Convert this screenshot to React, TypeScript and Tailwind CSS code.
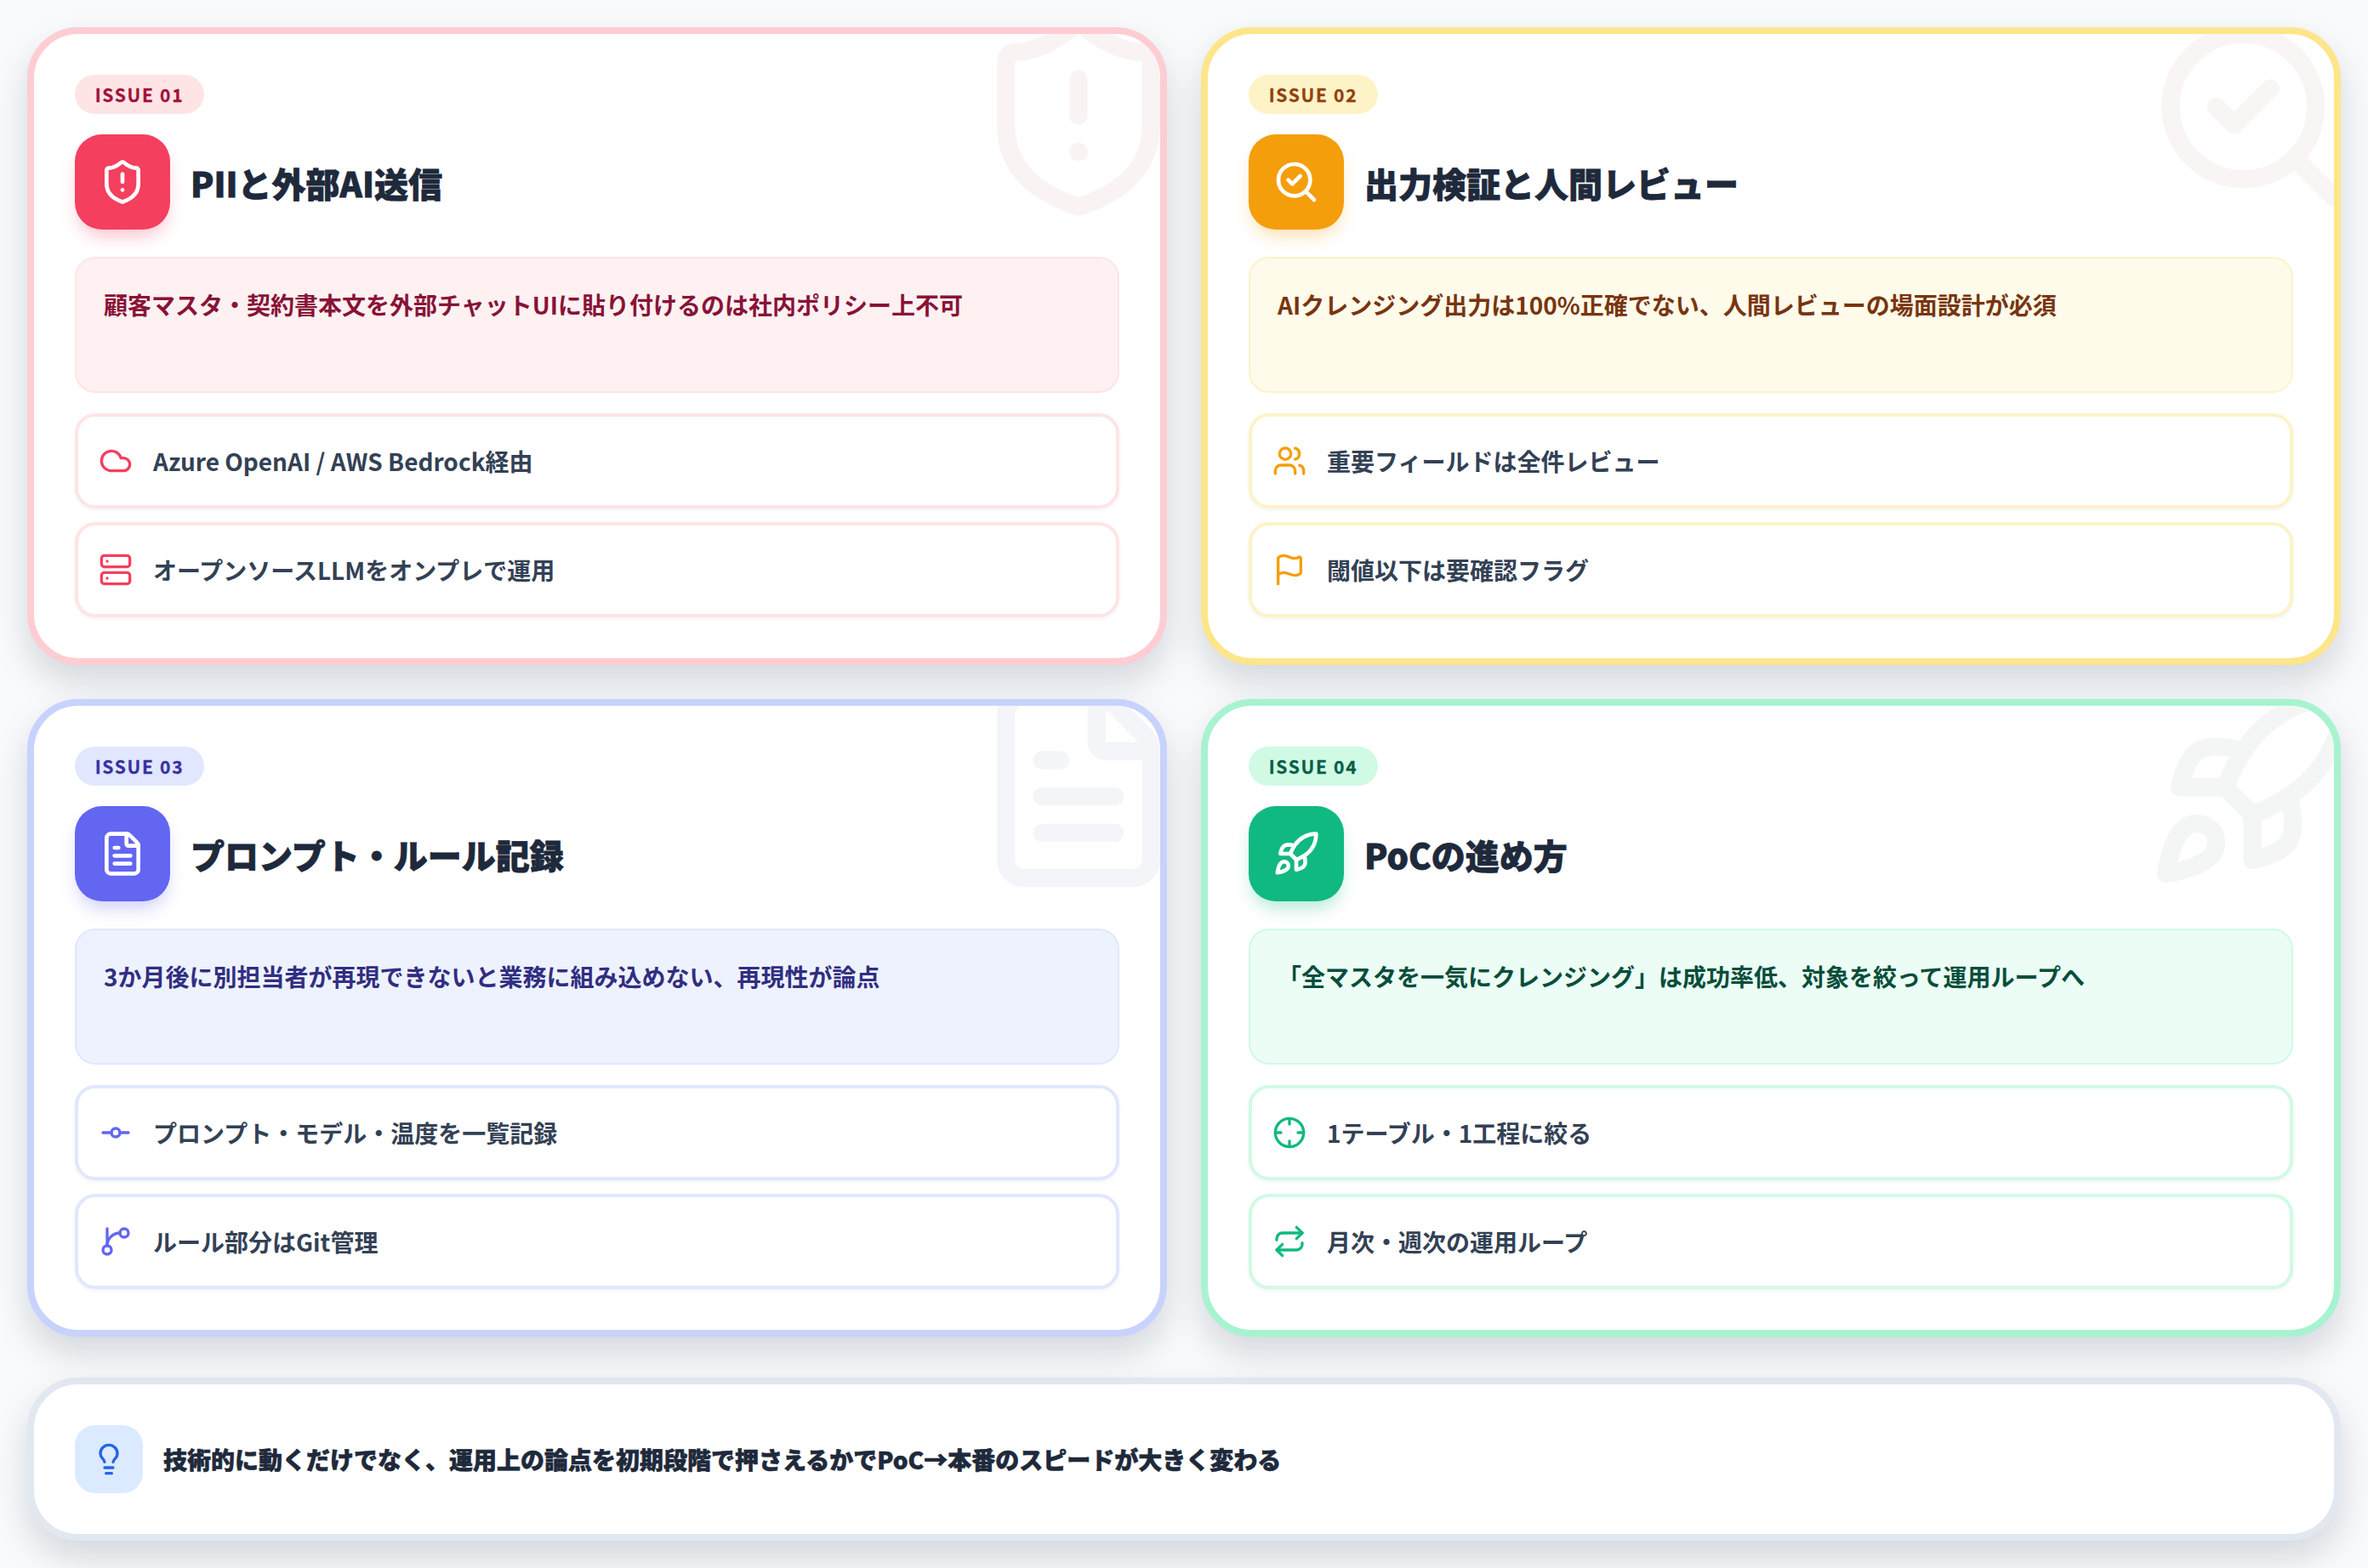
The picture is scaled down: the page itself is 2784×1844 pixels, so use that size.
import React from "react";
import {
  ShieldAlert, SearchCheck, FileText, Rocket, Cloud, Server, Users, Flag,
  GitCommitHorizontal, Crosshair, Repeat, Lightbulb, LucideProps,
} from "lucide-react";

type IconType = React.ComponentType<LucideProps>;

function BranchIcon({ size = 24, strokeWidth = 2, className }: LucideProps) {
  return (
    <svg
      width={size}
      height={size}
      viewBox="0 0 24 24"
      fill="none"
      stroke="currentColor"
      strokeWidth={strokeWidth}
      strokeLinecap="round"
      strokeLinejoin="round"
      className={className}
    >
      <path d="M6 3v12" />
      <circle cx="18" cy="6" r="3" />
      <circle cx="6" cy="18" r="3" />
      <path d="M15 6a9 9 0 0 0-9 9" />
    </svg>
  );
}

type Issue = {
  no: string; title: string; note: string;
  icon: IconType; mark: string;
  border: string; pill: string; box: string; info: string; row: string; rowIcon: string;
  items: { icon: IconType; text: string }[];
};

const issues: Issue[] = [
  {
    no: "ISSUE 01", title: "PIIと外部AI送信",
    note: "顧客マスタ・契約書本文を外部チャットUIに貼り付けるのは社内ポリシー上不可",
    icon: ShieldAlert, mark: "text-[#faf3f4]",
    border: "border-[#fecdd3]",
    pill: "bg-[#ffe4e6] text-[#9f1239]",
    box: "bg-[#f43f5e] shadow-[0_12px_20px_-4px_rgba(244,63,94,0.3)]",
    info: "bg-[#fff1f2] border-[#ffe4e6] text-[#881337]",
    row: "border-[#ffe4e6]", rowIcon: "text-[#f43f5e]",
    items: [
      { icon: Cloud, text: "Azure OpenAI / AWS Bedrock経由" },
      { icon: Server, text: "オープンソースLLMをオンプレで運用" },
    ],
  },
  {
    no: "ISSUE 02", title: "出力検証と人間レビュー",
    note: "AIクレンジング出力は100%正確でない、人間レビューの場面設計が必須",
    icon: SearchCheck, mark: "text-[#f8f5f4]",
    border: "border-[#fde68a]",
    pill: "bg-[#fef3c7] text-[#92400e]",
    box: "bg-[#f59e0b] shadow-[0_12px_20px_-4px_rgba(245,158,11,0.3)]",
    info: "bg-[#fffbeb] border-[#fef3c7] text-[#78350f]",
    row: "border-[#fef3c7]", rowIcon: "text-[#f59e0b]",
    items: [
      { icon: Users, text: "重要フィールドは全件レビュー" },
      { icon: Flag, text: "閾値以下は要確認フラグ" },
    ],
  },
  {
    no: "ISSUE 03", title: "プロンプト・ルール記録",
    note: "3か月後に別担当者が再現できないと業務に組み込めない、再現性が論点",
    icon: FileText, mark: "text-[#f4f5f8]",
    border: "border-[#c7d2fe]",
    pill: "bg-[#e0e7ff] text-[#3730a3]",
    box: "bg-[#6366f1] shadow-[0_12px_20px_-4px_rgba(99,102,241,0.3)]",
    info: "bg-[#eef2ff] border-[#e0e7ff] text-[#312e81]",
    row: "border-[#e0e7ff]", rowIcon: "text-[#6366f1]",
    items: [
      { icon: GitCommitHorizontal, text: "プロンプト・モデル・温度を一覧記録" },
      { icon: BranchIcon, text: "ルール部分はGit管理" },
    ],
  },
  {
    no: "ISSUE 04", title: "PoCの進め方",
    note: "「全マスタを一気にクレンジング」は成功率低、対象を絞って運用ループへ",
    icon: Rocket, mark: "text-[#f4f6f5]",
    border: "border-[#a7f3d0]",
    pill: "bg-[#d1fae5] text-[#065f46]",
    box: "bg-[#10b981] shadow-[0_12px_20px_-4px_rgba(16,185,129,0.3)]",
    info: "bg-[#ecfdf5] border-[#d1fae5] text-[#064e3b]",
    row: "border-[#d1fae5]", rowIcon: "text-[#10b981]",
    items: [
      { icon: Crosshair, text: "1テーブル・1工程に絞る" },
      { icon: Repeat, text: "月次・週次の運用ループ" },
    ],
  },
];

function Card({ issue }: { issue: Issue }) {
  const Icon = issue.icon;
  return (
    <div className={`relative h-[750px] overflow-hidden rounded-[60px] border-[8px] bg-white p-[48px] shadow-[0_20px_40px_rgba(15,23,42,0.15)] ${issue.border}`}>
      <Icon size={256} strokeWidth={2} className={`absolute right-[-32px] top-[-32px] ${issue.mark}`} />
      <div className="relative flex flex-col">
        <span className={`flex h-[46px] w-[152px] items-center justify-center rounded-full pt-[2px] text-[21px] font-bold tracking-[1.7px] [-webkit-text-stroke:0.3px_currentColor] ${issue.pill}`}>
          {issue.no}
        </span>
        <div className="mt-[24px] flex items-center gap-[24px]">
          <div className={`flex h-[112px] w-[112px] items-center justify-center rounded-[32px] text-white ${issue.box}`}>
            <Icon size={56} strokeWidth={2} />
          </div>
          <h2 className="pt-[2px] text-[40px] font-black leading-none text-[#1e293b] [-webkit-text-stroke:0.8px_#1e293b]">{issue.title}</h2>
        </div>
        <div className={`mt-[32px] h-[160px] rounded-[24px] border-2 px-[32px] py-[32px] text-[28px] font-bold leading-[1.6] ${issue.info}`}>
          {issue.note}
        </div>
        <div className="mt-[24px] flex flex-col gap-[16px]">
          {issue.items.map((it) => {
            const ItemIcon = it.icon;
            return (
              <div key={it.text} className={`flex h-[112px] items-center gap-[24px] rounded-[24px] border-[4px] bg-white px-[24px] shadow-[0_2px_4px_rgba(15,23,42,0.05)] ${issue.row}`}>
                <ItemIcon size={40} strokeWidth={2} className={`shrink-0 ${issue.rowIcon}`} />
                <span className="text-[28px] font-bold text-[#334155]">{it.text}</span>
              </div>
            );
          })}
        </div>
      </div>
    </div>
  );
}

export default function App() {
  return (
    <div className="h-[1844px] w-[2784px] overflow-hidden bg-[#f8fafc] p-[32px] font-['Noto_Sans_CJK_JP','Noto_Sans',sans-serif]">
      <div className="grid grid-cols-2 gap-[40px]">
        {issues.map((i) => (
          <Card key={i.no} issue={i} />
        ))}
      </div>
      <div className="mt-[48px] flex h-[192px] items-center gap-[24px] rounded-[60px] border-[8px] border-[#e2e8f0] bg-white px-[48px] shadow-[0_20px_40px_rgba(15,23,42,0.15)]">
        <div className="flex h-[80px] w-[80px] items-center justify-center rounded-[24px] bg-[#dbeafe] text-[#2563eb]">
          <Lightbulb size={40} strokeWidth={2} />
        </div>
        <p className="text-[28px] font-black text-[#1e293b] [-webkit-text-stroke:0.6px_#1e293b]">
          技術的に動くだけでなく、運用上の論点を初期段階で押さえるかでPoC→本番のスピードが大きく変わる
        </p>
      </div>
    </div>
  );
}
